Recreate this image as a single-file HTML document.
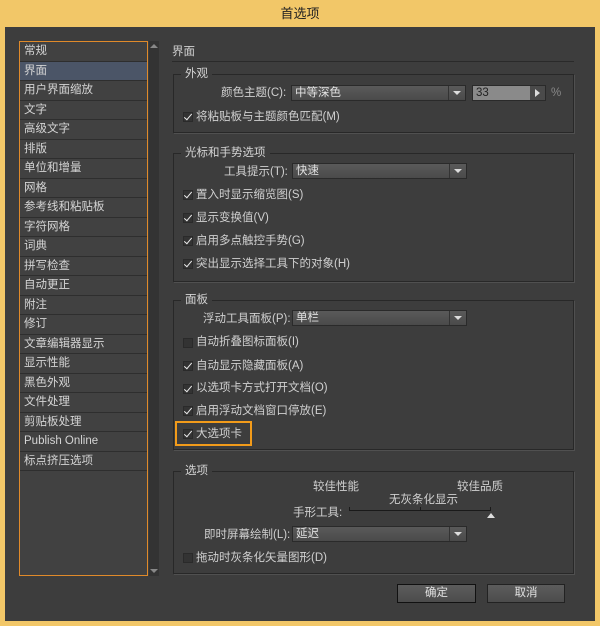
<!DOCTYPE html>
<html><head><meta charset="utf-8"><style>
*{margin:0;padding:0;box-sizing:border-box}
body{width:600px;height:626px;background:#f2c768;font-family:"Liberation Sans","Noto Sans CJK SC",sans-serif;font-size:12px;color:#d0d0d0;position:relative;overflow:hidden}
.win{position:absolute;left:5px;top:27px;width:590px;height:594px;background:#3d3d3d}
.title{position:absolute;left:0;top:0;width:600px;height:27px;text-align:center;line-height:27px;font-size:13px;color:#222}
.a{position:absolute;white-space:nowrap;line-height:16px;font-size:11.5px}
.list{position:absolute;left:19px;top:41px;width:129px;height:535px;border:1px solid #e08a2a;background:#414141}
.it{height:19.5px;line-height:19px;padding-left:4px;border-bottom:1px solid #2e2e2e;color:#d4d4d4;font-size:11.5px}
.sel{background:#4b5567}
.sb{position:absolute;left:149px;top:41px;width:10px;height:535px;background:#333}
.grp{position:absolute;left:173px;width:401px;border:1px solid #282828;box-shadow:1px 1px 0 #505050}
.lg{position:absolute;top:-9px;left:7px;background:#3d3d3d;padding:0 4px;line-height:16px;color:#d4d4d4;font-size:11.5px}
.dd{position:absolute;height:16px;background:linear-gradient(#5a5a5a,#4a4a4a);border:1px solid #2a2a2a;line-height:14px;padding-left:3px;color:#e0e0e0;font-size:11.5px}
.dd:after{content:"";position:absolute;right:0;top:0;width:16px;height:14px;border-left:1px solid #333;background:linear-gradient(#5a5a5a,#4a4a4a)}
.dd i{position:absolute;right:4px;top:5px;width:0;height:0;border-left:4px solid transparent;border-right:4px solid transparent;border-top:4px solid #ddd;z-index:2}
.cb{position:absolute;width:10px;height:10px;background:#333;border:1px solid #2a2a2a}
.cb.c:after{content:"";position:absolute;left:2px;top:-1px;width:3px;height:7px;border-right:1.5px solid #eee;border-bottom:1.5px solid #eee;transform:rotate(40deg)}
.btn{position:absolute;top:584px;height:19px;border:1px solid #222;background:linear-gradient(#5c5c5c,#4c4c4c);text-align:center;line-height:17px;color:#e0e0e0;font-size:11.5px}
</style></head><body>
<div class="title">首选项</div>
<div class="win"></div>
<div class="list">
<div class="it">常规</div><div class="it sel">界面</div><div class="it">用户界面缩放</div><div class="it">文字</div><div class="it">高级文字</div><div class="it">排版</div><div class="it">单位和增量</div><div class="it">网格</div><div class="it">参考线和粘贴板</div><div class="it">字符网格</div><div class="it">词典</div><div class="it">拼写检查</div><div class="it">自动更正</div><div class="it">附注</div><div class="it">修订</div><div class="it">文章编辑器显示</div><div class="it">显示性能</div><div class="it">黑色外观</div><div class="it">文件处理</div><div class="it">剪贴板处理</div><div class="it">Publish Online</div><div class="it">标点挤压选项</div>
</div>
<div class="sb"><div style="position:absolute;left:1px;top:3px;border-left:4px solid transparent;border-right:4px solid transparent;border-bottom:4px solid #888"></div><div style="position:absolute;left:1px;bottom:3px;border-left:4px solid transparent;border-right:4px solid transparent;border-top:4px solid #888"></div></div>

<div class="a" style="left:172px;top:44px">界面</div>
<div style="position:absolute;left:172px;top:61px;width:402px;height:1px;background:#2a2a2a"></div>

<div class="grp" style="top:74px;height:59px"><div class="lg">外观</div></div>
<div class="a" style="left:221px;top:85px">颜色主题(C):</div>
<div class="dd" style="left:291px;top:85px;width:175px">中等深色<i></i></div>
<div style="position:absolute;left:472px;top:85px;width:74px;height:16px;border:1px solid #2a2a2a;background:#8a8a8a;color:#222;line-height:14px;padding-left:3px;font-size:11.5px">33<span style="position:absolute;right:0;top:0;width:15px;height:14px;background:#4a4a4a"></span><span style="position:absolute;right:5px;top:3px;border-top:4px solid transparent;border-bottom:4px solid transparent;border-left:5px solid #ddd"></span></div>
<div class="a" style="left:551px;top:85px;color:#888">%</div>
<div class="cb c" style="left:183px;top:112px"></div><div class="a" style="left:196px;top:109px">将粘贴板与主题颜色匹配(M)</div>

<div class="grp" style="top:153px;height:129px"><div class="lg">光标和手势选项</div></div>
<div class="a" style="left:224px;top:164px">工具提示(T):</div>
<div class="dd" style="left:292px;top:163px;width:175px">快速<i></i></div>
<div class="cb c" style="left:183px;top:190px"></div><div class="a" style="left:196px;top:187px">置入时显示缩览图(S)</div>
<div class="cb c" style="left:183px;top:213px"></div><div class="a" style="left:196px;top:210px">显示变换值(V)</div>
<div class="cb c" style="left:183px;top:236px"></div><div class="a" style="left:196px;top:233px">启用多点触控手势(G)</div>
<div class="cb c" style="left:183px;top:259px"></div><div class="a" style="left:196px;top:256px">突出显示选择工具下的对象(H)</div>

<div class="grp" style="top:300px;height:150px"><div class="lg">面板</div></div>
<div class="a" style="left:203px;top:311px">浮动工具面板(P):</div>
<div class="dd" style="left:292px;top:310px;width:175px">单栏<i></i></div>
<div class="cb" style="left:183px;top:338px"></div><div class="a" style="left:196px;top:334px">自动折叠图标面板(I)</div>
<div class="cb c" style="left:183px;top:361px"></div><div class="a" style="left:196px;top:358px">自动显示隐藏面板(A)</div>
<div class="cb c" style="left:183px;top:384px"></div><div class="a" style="left:196px;top:380px">以选项卡方式打开文档(O)</div>
<div class="cb c" style="left:183px;top:406px"></div><div class="a" style="left:196px;top:403px">启用浮动文档窗口停放(E)</div>
<div style="position:absolute;left:175px;top:421px;width:77px;height:25px;border:2px solid #f29b1a"></div>
<div class="cb c" style="left:183px;top:429px"></div><div class="a" style="left:196px;top:426px">大选项卡</div>

<div class="grp" style="top:471px;height:103px"><div class="lg">选项</div></div>
<div class="a" style="left:313px;top:479px">较佳性能</div>
<div class="a" style="left:457px;top:479px">较佳品质</div>
<div class="a" style="left:389px;top:492px">无灰条化显示</div>
<div class="a" style="left:293px;top:505px">手形工具:</div>
<div style="position:absolute;left:349px;top:510px;width:142px;height:1px;background:#1a1a1a"></div>
<div style="position:absolute;left:349px;top:507px;width:1px;height:4px;background:#1a1a1a"></div>
<div style="position:absolute;left:420px;top:507px;width:1px;height:4px;background:#1a1a1a"></div>
<div style="position:absolute;left:490px;top:507px;width:1px;height:4px;background:#1a1a1a"></div>
<div style="position:absolute;left:487px;top:513px;border-left:4px solid transparent;border-right:4px solid transparent;border-bottom:5px solid #ddd"></div>
<div class="a" style="left:204px;top:527px">即时屏幕绘制(L):</div>
<div class="dd" style="left:292px;top:526px;width:175px">延迟<i></i></div>
<div class="cb" style="left:183px;top:553px"></div><div class="a" style="left:196px;top:550px">拖动时灰条化矢量图形(D)</div>

<div class="btn" style="left:397px;width:79px;border-color:#111">确定</div>
<div class="btn" style="left:487px;width:78px">取消</div>
</body></html>
